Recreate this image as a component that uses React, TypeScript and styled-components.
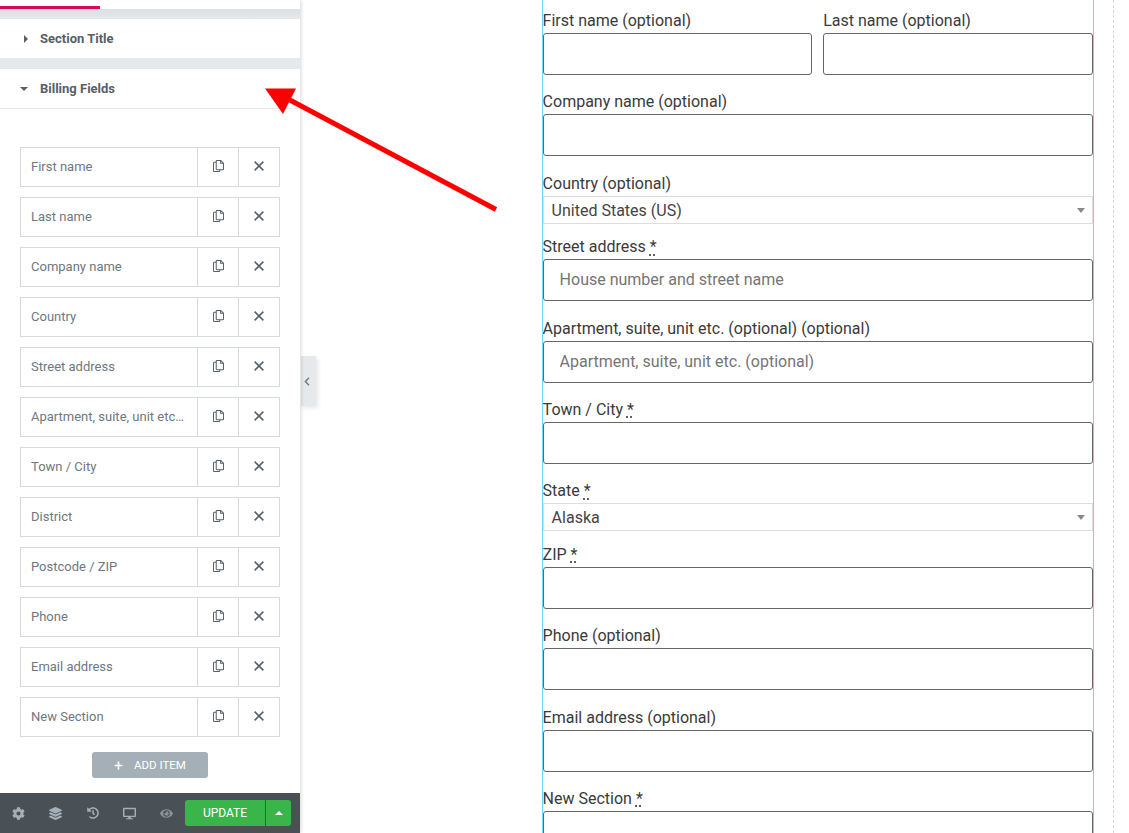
import React from "react";
import styled, { createGlobalStyle } from "styled-components";
import { FaCog, FaLayerGroup, FaHistory, FaDesktop, FaEye, FaPlus } from "react-icons/fa";

const Global = createGlobalStyle`
  html, body { margin: 0; padding: 0; height: 833px; overflow: hidden; background: #fff; }
  * { box-sizing: border-box; }
  body { font-family: Roboto, "Liberation Sans", sans-serif; }
`;

const Page = styled.div`
  display: flex;
  position: relative;
  width: 1129px;
  height: 833px;
  overflow: hidden;
`;

const Sidebar = styled.aside`
  width: 300px;
  height: 833px;
  flex: none;
  display: flex;
  flex-direction: column;
  background: #fff;
  box-shadow: 1px 0 4px rgba(0, 0, 0, 0.16);
  position: relative;
  z-index: 1;
`;

const TabBar = styled.div`
  height: 9px;
  display: flex;
  align-items: flex-end;
`;

const TabMark = styled.div`
  width: 100px;
  height: 3px;
  background: #d30c5c;
`;

const Band = styled.div<{ $h: number; $shade?: boolean }>`
  height: ${(p) => p.$h}px;
  background: ${(p) => (p.$shade ? "linear-gradient(#dcdfe3, #e6e9ec)" : "#e6e9ec")};
`;

const SectionHead = styled.div<{ $open?: boolean }>`
  height: ${(p) => (p.$open ? 40 : 39)}px;
  display: flex;
  align-items: center;
  font-size: 13px;
  font-weight: 700;
  color: #556068;
  border-bottom: ${(p) => (p.$open ? "1px solid #e6e9ec" : "none")};
`;

const CaretSlot = styled.span`
  width: 40px;
  flex: none;
  display: flex;
  justify-content: flex-end;
  padding-right: 12px;
`;

const CaretRight = styled.i`
  width: 0;
  height: 0;
  border-left: 4px solid #556068;
  border-top: 4px solid transparent;
  border-bottom: 4px solid transparent;
`;

const CaretDown = styled.i`
  width: 0;
  height: 0;
  border-top: 4px solid #556068;
  border-left: 4px solid transparent;
  border-right: 4px solid transparent;
`;

const Items = styled.div`
  display: flex;
  flex-direction: column;
  gap: 10px;
  padding: 38px 20px 0;
`;

const Item = styled.div`
  height: 40px;
  display: grid;
  grid-template-columns: minmax(0, 1fr) 41px 41px;
  border: 1px solid #d5dadf;
`;

const ItemTitle = styled.div`
  min-width: 0;
  padding: 0 10px;
  line-height: 37px;
  font-size: 13px;
  color: #6d7882;
  white-space: nowrap;
  overflow: hidden;
  text-overflow: ellipsis;
`;

const ItemTool = styled.div`
  border-left: 1px solid #d5dadf;
  padding-bottom: 2px;
  display: flex;
  align-items: center;
  justify-content: center;
  color: #556068;
`;

const CopyTool = styled(ItemTool)`
  padding-left: 1px;
`;

const AddRow = styled.div`
  display: flex;
  justify-content: center;
  padding-top: 15px;
`;

const AddButton = styled.div`
  width: 116px;
  height: 26px;
  border-radius: 3px;
  background: #a4afb7;
  color: #fff;
  font-size: 11.5px;
  display: flex;
  align-items: center;
  justify-content: center;
  gap: 11px;
`;

const Footer = styled.footer`
  margin-top: auto;
  height: 40px;
  background: #495157;
  display: flex;
  align-items: center;
`;

const FooterTool = styled.div<{ $dim?: boolean }>`
  width: 37px;
  flex: none;
  display: flex;
  align-items: center;
  justify-content: center;
  color: #a4afb7;
  opacity: ${(p) => (p.$dim ? 0.7 : 1)};
`;

const Update = styled.div`
  display: flex;
  height: 26px;
  color: #fff;
  font-size: 12px;
`;

const UpdateMain = styled.div`
  width: 80px;
  background: #39b54a;
  border-radius: 3px 0 0 3px;
  display: flex;
  align-items: center;
  justify-content: center;
`;

const UpdateMore = styled.div`
  width: 25px;
  margin-left: 1px;
  background: #39b54a;
  border-radius: 0 3px 3px 0;
  display: flex;
  align-items: center;
  justify-content: center;
`;

const UpCaret = styled.i`
  width: 0;
  height: 0;
  border-bottom: 4px solid #fff;
  border-left: 4px solid transparent;
  border-right: 4px solid transparent;
`;

const Handle = styled.div`
  position: absolute;
  left: 301px;
  top: 356px;
  width: 15px;
  height: 50px;
  padding-right: 3px;
  background: #e6e9ec;
  box-shadow: 2px 2px 4px rgba(0, 0, 0, 0.1);
  display: flex;
  align-items: center;
  justify-content: center;
  color: #6d7882;
`;

const Canvas = styled.main`
  flex: 1;
  min-width: 0;
  padding-left: 242px;
`;

const Frame = styled.div`
  width: 572px;
  height: 833px;
  padding-right: 19px;
  border-right: 1px dashed #d5d8dc;
`;

const Column = styled.div`
  width: 552px;
  height: 833px;
  border-left: 1px solid #71d7f7;
  border-right: 1px solid #71d7f7;
  padding-top: 8.05px;
  overflow: hidden;
  color: #3a3a3a;
`;

const ColumnInner = styled.div`
  margin-left: -0.4px;
`;

const TwoUp = styled.div`
  display: grid;
  grid-template-columns: 269px 269.8px;
  gap: 11.6px;
`;

const Field = styled.div<{ $compact?: boolean }>`
  margin-bottom: ${(p) => (p.$compact ? 10.4 : 14.4)}px;
`;

const Label = styled.label`
  display: block;
  height: 25px;
  font-size: 16px;
  line-height: 25.6px;
  color: #3a3a3a;
  white-space: nowrap;
`;

const Required = styled.abbr`
  text-decoration: underline dotted;
  text-underline-offset: 2px;
`;

const TextInput = styled.input`
  display: block;
  width: 100%;
  height: 42px;
  padding: 0 16px 1px;
  border: 1px solid #666;
  border-radius: 3px;
  background: #fff;
  font: 16px Roboto, sans-serif;
  color: #3a3a3a;
  outline: none;
  &::placeholder { color: #757575; opacity: 1; }
`;

const SelectBox = styled.div`
  height: 28px;
  display: flex;
  align-items: center;
  justify-content: space-between;
  padding: 0.6px 7px 0 8px;
  border: 1px solid #ddd;
  font-size: 16px;
  color: #444;
`;

const SelectCaret = styled.i`
  width: 0;
  height: 0;
  border-top: 5px solid #888;
  border-left: 4px solid transparent;
  border-right: 4px solid transparent;
`;

const ArrowLayer = styled.svg`
  position: absolute;
  left: 0;
  top: 0;
  z-index: 2;
  pointer-events: none;
`;

const CopyIcon = () => (
  <svg width="11" height="12" viewBox="0 0 12 13" fill="none" stroke="currentColor" strokeWidth="1.1">
    <path d="M3.5 2.5H1.2a.7.7 0 0 0-.7.7v8.6c0 .4.3.7.7.7h5.6c.4 0 .7-.3.7-.7V10.5" />
    <path d="M3.5 1.2c0-.4.3-.7.7-.7h4.3L11.5 3.4v6.4c0 .4-.3.7-.7.7H4.2a.7.7 0 0 1-.7-.7z" />
    <path d="M8.3.7v2.8h3" />
  </svg>
);

const CloseIcon = () => (
  <svg width="10" height="10" viewBox="0 0 10 10" fill="none" stroke="currentColor" strokeWidth="1.5">
    <path d="M.6.6l8.8 8.8M9.4.6L.6 9.4" />
  </svg>
);

const ChevronIcon = () => (
  <svg width="6" height="9" viewBox="0 0 6 9" fill="none" stroke="currentColor" strokeWidth="1.4">
    <path d="M5 .8L1.4 4.5 5 8.2" />
  </svg>
);

const fields = [
  "First name",
  "Last name",
  "Company name",
  "Country",
  "Street address",
  "Apartment, suite, unit etc. (optional)",
  "Town / City",
  "District",
  "Postcode / ZIP",
  "Phone",
  "Email address",
  "New Section",
];

const Req = () => <Required title="required">*</Required>;

export default function App() {
  return (
    <Page>
      <Global />
      <Sidebar>
        <TabBar><TabMark /></TabBar>
        <Band $h={10} $shade />
        <SectionHead>
          <CaretSlot><CaretRight /></CaretSlot>
          Section Title
        </SectionHead>
        <Band $h={11} />
        <SectionHead $open>
          <CaretSlot><CaretDown /></CaretSlot>
          Billing Fields
        </SectionHead>
        <Items>
          {fields.map((f) => (
            <Item key={f}>
              <ItemTitle>{f}</ItemTitle>
              <CopyTool><CopyIcon /></CopyTool>
              <ItemTool><CloseIcon /></ItemTool>
            </Item>
          ))}
        </Items>
        <AddRow>
          <AddButton><FaPlus size={9} /> ADD ITEM</AddButton>
        </AddRow>
        <Footer>
          <FooterTool><FaCog size={13} /></FooterTool>
          <FooterTool><FaLayerGroup size={13} /></FooterTool>
          <FooterTool><FaHistory size={12} /></FooterTool>
          <FooterTool><FaDesktop size={13} /></FooterTool>
          <FooterTool $dim><FaEye size={13} /></FooterTool>
          <Update>
            <UpdateMain>UPDATE</UpdateMain>
            <UpdateMore><UpCaret /></UpdateMore>
          </Update>
        </Footer>
      </Sidebar>
      <Handle><ChevronIcon /></Handle>
      <Canvas>
        <Frame>
          <Column>
            <ColumnInner>
              <Field>
                <TwoUp>
                  <div>
                    <Label>First name (optional)</Label>
                    <TextInput />
                  </div>
                  <div>
                    <Label>Last name (optional)</Label>
                    <TextInput />
                  </div>
                </TwoUp>
              </Field>
              <Field>
                <Label>Company name (optional)</Label>
                <TextInput />
              </Field>
              <Field $compact>
                <Label>Country (optional)</Label>
                <SelectBox>United States (US)<SelectCaret /></SelectBox>
              </Field>
              <Field>
                <Label>Street address <Req /></Label>
                <TextInput placeholder="House number and street name" />
              </Field>
              <Field>
                <Label>Apartment, suite, unit etc. (optional) (optional)</Label>
                <TextInput placeholder="Apartment, suite, unit etc. (optional)" />
              </Field>
              <Field>
                <Label>Town / City <Req /></Label>
                <TextInput />
              </Field>
              <Field $compact>
                <Label>State <Req /></Label>
                <SelectBox>Alaska<SelectCaret /></SelectBox>
              </Field>
              <Field>
                <Label>ZIP <Req /></Label>
                <TextInput />
              </Field>
              <Field>
                <Label>Phone (optional)</Label>
                <TextInput />
              </Field>
              <Field>
                <Label>Email address (optional)</Label>
                <TextInput />
              </Field>
              <Field>
                <Label>New Section <Req /></Label>
                <TextInput />
              </Field>
            </ColumnInner>
          </Column>
        </Frame>
      </Canvas>
      <ArrowLayer width="1129" height="833" viewBox="0 0 1129 833">
        <path d="M496 209.5L288 99" stroke="#fe0000" strokeWidth="5" fill="none" />
        <path d="M265 88.5H296L283 114z" fill="#fe0000" />
      </ArrowLayer>
    </Page>
  );
}
